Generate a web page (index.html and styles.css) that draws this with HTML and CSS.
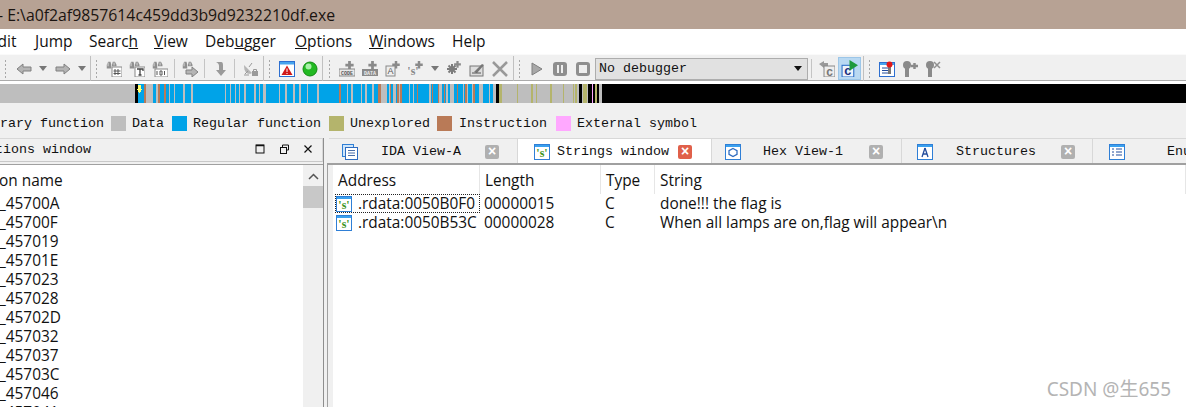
FILE: index.html
```html
<!DOCTYPE html>
<html lang="en">
<head>
<meta charset="utf-8">
<title>IDA</title>
<link rel="stylesheet" href="styles.css">
</head>
<body>
<svg class="defs" width="0" height="0">
  <defs>
    <symbol id="bino" viewBox="0 0 16 16"><path d="M1 5l2-4h3l1 4v5H1zM8 5l1-4h3l2 4v2H8z" fill="#8f8f8f"/><rect x="2" y="2" width="1.5" height="5" fill="#d0d0d0"/><rect x="10" y="2" width="1.5" height="4" fill="#d0d0d0"/></symbol>
    <symbol id="plus" viewBox="0 0 16 16"><path d="M6 0h4v4h4v4h-4v4H6V8H2V4h4z" fill="#8a8a8a"/></symbol>
    <symbol id="sicon" viewBox="0 0 16 16"><rect x=".5" y=".5" width="15" height="15" fill="#fff" stroke="#2f7fd6"/><rect x="1" y="1" width="14" height="2" fill="#3aa0ee"/><text x="8" y="13" class="icon-s">'s'</text></symbol>
  </defs>
</svg>
<div class="app">
  <header class="title">- E:\a0f2af9857614c459dd3b9d9232210df.exe</header>

  <nav class="menu">
    <span class="menu-edit">Edit</span>
    <span class="m-jump"><u>J</u>ump</span>
    <span class="m-search">Searc<u>h</u></span>
    <span class="m-view"><u>V</u>iew</span>
    <span class="m-debug">Deb<u>u</u>gger</span>
    <span class="m-opt"><u>O</u>ptions</span>
    <span class="m-win"><u>W</u>indows</span>
    <span class="m-help">Help</span>
  </nav>

  <div class="toolbar">
    <div class="tg g1">
      <i class="grip"></i>
      <span class="tb"><svg class="i" viewBox="0 0 16 16"><path d="M1 8l6-5v3h8v4H7v3z" fill="#b4b4b4" stroke="#808080"/></svg></span>
      <span class="dd"><i class="caret"></i></span>
      <span class="tb"><svg class="i" viewBox="0 0 16 16"><path d="M15 8L9 3v3H1v4h8v3z" fill="#b4b4b4" stroke="#808080"/></svg></span>
      <span class="dd"><i class="caret"></i></span>
    </div>
    <div class="tg g2">
      <i class="grip"></i>
      <span class="tb"><svg class="i" viewBox="0 0 16 16"><use href="#bino" width="12" height="12"/><rect x="6" y="6" width="10" height="10" fill="#fff" stroke="#888"/><path d="M9 8v6M12 8v6M7.500 10h7M7.500 12.500h7" stroke="#555"/></svg></span>
      <span class="tb"><svg class="i" viewBox="0 0 16 16"><use href="#bino" width="12" height="12"/><rect x="6" y="6" width="10" height="10" fill="#fff" stroke="#888"/><path d="M8 8h6v2M11 8v6M9.500 14h3" fill="none" stroke="#444" stroke-width="1.300"/></svg></span>
      <span class="tb"><svg class="i" viewBox="0 0 16 16"><use href="#bino" width="12" height="12"/><rect x="3" y="8" width="13" height="8" fill="#fff" stroke="#888"/><path d="M5 10v4M8 10h2v4H8zM12.500 10v4" fill="none" stroke="#555"/></svg></span>
      <i class="sep"></i>
      <span class="tb"><svg class="i" viewBox="0 0 16 16"><use href="#bino" width="12" height="12"/><path d="M4 9h6V6l6 5-6 5v-3H4z" fill="#b4b4b4" stroke="#808080"/></svg></span>
      <i class="sep"></i>
      <span class="tb"><svg class="i" viewBox="0 0 16 16"><path d="M4 1h5c2 0 2 2 2 4v4h3l-5 6-5-6h3V5c0-2-1-3-3-4z" fill="#9a9a9a"/></svg></span>
      <i class="sep"></i>
      <span class="tb"><svg class="i" viewBox="0 0 16 16"><path d="M2 4l8 8c-3 2-8 1-8-8z" fill="#b5b5b5"/><path d="M3 13l3-3M2 14h5M7 6l3-4" stroke="#999"/><rect x="10" y="10" width="6" height="5" fill="#9a9a9a"/><path d="M11.500 10V8.500h3V10" fill="none" stroke="#9a9a9a"/></svg></span>
    </div>
    <div class="tg g3">
      <i class="grip"></i>
      <span class="tb"><svg class="i" viewBox="0 0 16 16"><rect x=".5" y=".5" width="15" height="15" fill="#fff" stroke="#2d6fd0"/><rect x="1" y="1" width="14" height="2.500" fill="#46a4ee"/><path d="M8 4.500l5.500 9.500h-11z" fill="#d01818"/><path d="M8 7.500v3.500M8 12v1" stroke="#fff"/></svg></span>
      <span class="tb"><svg class="i" viewBox="0 0 16 16"><circle cx="8" cy="8" r="7" fill="#22b922" stroke="#128a12"/><circle cx="6.500" cy="5.500" r="3" fill="#a8f0a8"/></svg></span>
    </div>
    <div class="tg g4">
      <i class="grip"></i>
      <span class="tb"><svg class="i" viewBox="0 0 16 16"><use href="#plus" x="5" y="0" width="11" height="11"/><rect x="0" y="8" width="16" height="7" fill="#e8e8e8" stroke="#888"/><text x="8" y="14" class="icon-t">CODE</text></svg></span>
      <span class="tb"><svg class="i" viewBox="0 0 16 16"><use href="#plus" x="5" y="0" width="11" height="11"/><rect x="0" y="8" width="16" height="7" fill="#8a8a8a"/><text x="8" y="14" class="icon-t light">DATA</text></svg></span>
      <span class="tb"><svg class="i" viewBox="0 0 16 16"><use href="#plus" x="6" y="0" width="10" height="10"/><rect x="1" y="5" width="9" height="10" fill="#eee" stroke="#888"/><text x="5.500" y="13" class="icon-l">A</text></svg></span>
      <span class="tb"><svg class="i" viewBox="0 0 16 16"><use href="#plus" x="6" y="0" width="10" height="10"/><text x="5" y="14" class="icon-g">'s'</text></svg></span>
      <span class="dd wide"><i class="caret"></i></span>
      <span class="tb"><svg class="i" viewBox="0 0 16 16"><use href="#plus" x="7" y="0" width="9" height="9"/><path d="M6 3v10M1 8h10M2.500 4.500l7 7M9.500 4.500l-7 7" stroke="#7c7c7c" stroke-width="2"/></svg></span>
      <span class="tb"><svg class="i" viewBox="0 0 16 16"><rect x="1" y="5" width="13" height="10" fill="#ddd" stroke="#777"/><path d="M5 11l8-8 2 1-7 8z" fill="#777"/><path d="M3 12h9" stroke="#555"/></svg></span>
      <span class="tb"><svg class="i" viewBox="0 0 16 16"><path d="M1 1l14 14M15 1L1 15" stroke="#999" stroke-width="2.500"/></svg></span>
    </div>
    <div class="tg g5">
      <i class="grip"></i>
      <span class="tb"><svg class="i" viewBox="0 0 16 16"><path d="M3 2l10 6-10 6z" fill="#a8a8a8" stroke="#808080"/></svg></span>
      <span class="tb"><svg class="i" viewBox="0 0 16 16"><rect x="1" y="1" width="14" height="14" rx="3" fill="#8e8e8e"/><rect x="5" y="4" width="2" height="8" fill="#eee"/><rect x="9" y="4" width="2" height="8" fill="#eee"/></svg></span>
      <span class="tb"><svg class="i" viewBox="0 0 16 16"><rect x="1" y="1" width="14" height="14" rx="3" fill="#8e8e8e"/><rect x="4" y="4" width="8" height="8" fill="#eee"/></svg></span>
      <div class="combo"><span>No debugger</span><i class="caret dark"></i></div>
      <i class="sep sep-c"></i>
      <span class="tb"><svg class="i" viewBox="0 0 16 16"><path d="M0 3l5-3v2h4v3H5v2z" fill="#999"/><rect x="5" y="5" width="11" height="11" fill="#eee" stroke="#888"/><text x="10.500" y="14.500" class="icon-c gray">c</text></svg></span>
      <span class="tb active"><svg class="i wide-i" viewBox="0 0 16 16"><rect x="1" y="5" width="11" height="11" fill="#eef4fa" stroke="#2c6fc8"/><text x="6.500" y="14.500" class="icon-c">c</text><path d="M8 0l8 5-8 5z" fill="#1f9a3c"/></svg></span>
    </div>
    <div class="tg g6">
      <i class="grip"></i>
      <span class="tb"><svg class="i" viewBox="0 0 16 16"><rect x=".5" y="1.500" width="15" height="14" fill="#fff" stroke="#2d6fd0"/><rect x="1" y="2" width="14" height="2" fill="#46a4ee"/><path d="M3 7h6M3 9.500h6M3 12h6" stroke="#234c9c"/><rect x="9" y="4" width="3" height="9" fill="#777"/><circle cx="10.500" cy="3.500" r="3" fill="#e01818"/></svg></span>
      <span class="tb"><svg class="i" viewBox="0 0 16 16"><circle cx="5" cy="4" r="4" fill="#8a8a8a"/><rect x="3" y="7" width="4" height="9" fill="#8a8a8a"/><path d="M9 5h7M12.500 2v6" stroke="#8a8a8a" stroke-width="2.500"/></svg></span>
      <span class="tb"><svg class="i" viewBox="0 0 16 16"><circle cx="5" cy="4" r="4" fill="#8a8a8a"/><rect x="3" y="7" width="4" height="9" fill="#8a8a8a"/><path d="M9 1l6 6M15 1L9 7" stroke="#909090" stroke-width="1.500"/></svg></span>
    </div>
  </div>

  <svg class="navbar" viewBox="0 0 1186 19" preserveAspectRatio="none" shape-rendering="crispEdges">
    <rect width="602" height="19" fill="#bebebe"/>
    <rect x="602" width="584" height="19" fill="#000"/>
    <rect x="135" width="3" height="19" fill="#000"/>
    <path d="M138 0h6v19h-6zM153 0h3v19h-3zM160 0h4v19h-4zM166 0h3v19h-3zM170 0h4v19h-4zM175 0h8v19h-8zM185 0h6v19h-6zM193 0h32v19h-32zM226 0h4v19h-4zM231 0h4v19h-4zM236 0h3v19h-3zM240 0h4v19h-4zM246 0h8v19h-8zM256 0h3v19h-3zM260 0h3v19h-3zM266 0h13v19h-13zM280 0h5v19h-5zM287 0h6v19h-6zM295 0h4v19h-4zM301 0h6v19h-6zM308 0h9v19h-9zM319 0h20v19h-20zM341 0h6v19h-6zM348 0h3v19h-3zM353 0h8v19h-8zM362 0h3v19h-3zM367 0h5v19h-5zM374 0h6v19h-6zM387 0h2v19h-2zM391 0h2v19h-2zM396 0h1v19h-1zM402 0h7v19h-7zM410 0h3v19h-3zM414 0h3v19h-3zM418 0h11v19h-11zM431 0h7v19h-7zM442 0h4v19h-4zM448 0h2v19h-2zM454 0h9v19h-9zM464 0h2v19h-2zM468 0h4v19h-4zM474 0h5v19h-5zM483 0h6v19h-6zM490 0h3v19h-3z" fill="#00a3e8"/>
    <path d="M144 0h2v19h-2zM158 0h2v19h-2zM164 0h2v19h-2zM339 0h2v19h-2zM378 0h2v19h-2zM397 0h2v19h-2zM400 0h2v19h-2zM417 0h1v19h-1zM438 0h1v19h-1zM444 0h1v19h-1zM465 0h1v19h-1zM473 0h1v19h-1zM380 0h1v19h-1zM390 0h1v19h-1zM432 0h1v19h-1zM457 0h1v19h-1zM465 0h2v19h-2zM473 0h2v19h-2z" fill="#b97a57"/>
    <path d="M499 0h3v19h-3zM517 0h1v19h-1zM531 0h2v19h-2zM536 0h1v19h-1zM550 0h2v19h-2zM563 0h1v19h-1zM573 0h1v19h-1zM575 0h2v19h-2zM583 0h4v19h-4zM595 0h2v19h-2z" fill="#b4b46c"/>
    <path d="M496 0h3v19h-3zM579 0h3v19h-3zM588 0h3v19h-3zM591 0h1v19h-1zM593 0h2v19h-2zM597 0h2v19h-2z" fill="#000"/>
    <rect x="592" width="1" height="19" fill="#ffa8ff"/>
    <path d="M138 1h3v4h1.500l-3 4-3-4H138z" fill="#ffff70"/>
  </svg>

  <div class="legend">
    <span class="lg-first">rary function</span>
    <i class="sw c-data"></i><span class="lg-data">Data</span>
    <i class="sw c-reg"></i><span class="lg-reg">Regular function</span>
    <i class="sw c-unx"></i><span class="lg-unx">Unexplored</span>
    <i class="sw c-ins"></i><span class="lg-ins">Instruction</span>
    <i class="sw c-ext"></i><span>External symbol</span>
  </div>

  <main class="main">
    <section class="left">
      <div class="panel-head">
        <span class="panel-title">tions window</span>
        <span class="win-btns">
          <svg class="wb" viewBox="0 0 11 11"><rect x="1" y="1" width="8" height="8" fill="none" stroke="#111" stroke-width="1"/><path d="M1 1.500h8" stroke="#111" stroke-width="1.500"/></svg>
          <svg class="wb" viewBox="0 0 11 11"><path d="M3.500 3V1h6v5H7.500" fill="none" stroke="#111"/><rect x="1.500" y="3.500" width="6" height="6" fill="none" stroke="#111"/></svg>
          <svg class="wb" viewBox="0 0 11 11"><path d="M1.500 1.500l7 7M8.500 1.500l-7 7" stroke="#111" stroke-width="1.200"/></svg>
        </span>
      </div>
      <div class="list-wrap">
        <div class="list">
          <div class="list-head">on name</div>
          <div class="item">_45700A</div>
          <div class="item">_45700F</div>
          <div class="item">_457019</div>
          <div class="item">_45701E</div>
          <div class="item">_457023</div>
          <div class="item">_457028</div>
          <div class="item">_45702D</div>
          <div class="item">_457032</div>
          <div class="item">_457037</div>
          <div class="item">_45703C</div>
          <div class="item">_457046</div>
          <div class="item">_457041</div>
        </div>
        <div class="scroll">
          <svg class="chev" viewBox="0 0 11 7"><path d="M1 6l4.500-4.500L10 6" fill="none" stroke="#555" stroke-width="1.500"/></svg>
          <div class="thumb"></div>
        </div>
      </div>
    </section>

    <section class="right">
      <div class="tabs">
        <div class="tab t1">
          <svg class="ti" viewBox="0 0 16 16"><rect x=".5" y=".5" width="11" height="12" fill="#cfe6fa" stroke="#2f7fd6"/><rect x="3.500" y="3.500" width="12" height="12" fill="#fff" stroke="#2f6cc0"/><path d="M6 6.500h7M6 9h7M6 11.500h7" stroke="#4a6ea8"/></svg>
          <span class="tab-text">IDA View-A</span><i class="close">×</i>
        </div>
        <div class="tab t2 on">
          <svg class="ti" viewBox="0 0 16 16"><use href="#sicon"/></svg>
          <span class="tab-text">Strings window</span><i class="close red">×</i>
        </div>
        <div class="tab t3">
          <svg class="ti" viewBox="0 0 16 16"><rect x=".5" y=".5" width="15" height="15" fill="#fff" stroke="#2f7fd6"/><rect x="1" y="1" width="14" height="2" fill="#3aa0ee"/><path d="M8 4.500l4 2.200v3.600L8 12.500l-4-2.200V6.700z" fill="none" stroke="#2f6cc0" stroke-width="1.300"/></svg>
          <span class="tab-text">Hex View-1</span><i class="close">×</i>
        </div>
        <div class="tab t4">
          <svg class="ti" viewBox="0 0 16 16"><rect x=".5" y=".5" width="15" height="15" fill="#fff" stroke="#2f7fd6"/><rect x="1" y="1" width="14" height="2" fill="#3aa0ee"/><path d="M8 4l3 9M8 4l-3 9M6 10h4" fill="none" stroke="#234c9c" stroke-width="1.300"/></svg>
          <span class="tab-text">Structures</span><i class="close">×</i>
        </div>
        <div class="tab t5">
          <svg class="ti" viewBox="0 0 16 16"><rect x=".5" y=".5" width="15" height="15" fill="#fff" stroke="#2f7fd6"/><rect x="1" y="1" width="14" height="2" fill="#3aa0ee"/><path d="M3 5h2M3 8h2M3 11h2M7 5h6M7 8h6M7 11h6" stroke="#234c9c"/></svg>
          <span class="tab-text">Enums</span>
        </div>
      </div>
      <div class="content">
        <div class="gutter"></div>
        <div class="table">
          <div class="th">Address</div><div class="th">Length</div><div class="th">Type</div><div class="th">String</div>
          <div class="td addr focus"><svg class="ti" viewBox="0 0 16 16"><use href="#sicon"/></svg><span>.rdata:0050B0F0</span></div>
          <div class="td">00000015</div><div class="td">C</div><div class="td last">done!!! the flag is</div>
          <div class="td addr"><svg class="ti" viewBox="0 0 16 16"><use href="#sicon"/></svg><span>.rdata:0050B53C</span></div>
          <div class="td">00000028</div><div class="td">C</div><div class="td last">When all lamps are on,flag will appear\n</div>
        </div>
      </div>
    </section>
  </main>
  <div class="mark">CSDN @生655</div>
</div>
</body>
</html>
```

FILE: styles.css
```css
* { box-sizing: border-box; }
html, body { margin: 0; height: 407px; overflow: hidden; background: #fff; }
body { font-family: "Open Sans", "Liberation Sans", sans-serif; color: #111; }
.defs { position: absolute; }
.app { position: relative; width: 1186px; height: 407px; overflow: hidden; display: flex; flex-direction: column; }

.title { height: 29px; flex: none; background: #b7a294; font-size: 15.8px; line-height: 30px; white-space: nowrap; color: #1a1410; margin-left: -2px; }

.menu { height: 25px; flex: none; background: #fff; display: flex; font-size: 15.5px; line-height: 25px; white-space: nowrap; margin-left: -11px; }
.menu span { flex: none; }
.menu-edit { width: 46px; }
.m-jump { width: 54px; }
.m-search { width: 65px; }
.m-view { width: 51px; }
.m-debug { width: 90px; }
.m-opt { width: 74px; }
.m-win { width: 83px; }

.toolbar { height: 27px; flex: none; display: flex; background: #f0f0f0; border-top: 1px solid #fafafa; border-bottom: 1px solid #ababab; padding-top: 1px; }
.tg { flex: none; display: flex; align-items: center; height: 25px; border-right: 1px solid #c0c0c0; }
.g1 { width: 91px; padding-left: 4px; }
.g2 { width: 173px; padding-left: 4px; }
.g3 { width: 59px; padding-left: 4px; }
.g4 { width: 191px; padding-left: 5px; }
.g5 { width: 350px; padding-left: 4px; }
.g6 { flex: 1; border-right: 0; padding-left: 4px; }
.grip { flex: none; width: 3px; height: 19px; margin-right: 4px; background: radial-gradient(circle, #a8a8a8 0 1px, transparent 1px) 0 0 / 3px 4px; }
.g1 .grip { margin-right: 5px; }
.tb { flex: none; width: 23px; height: 23px; display: flex; align-items: center; justify-content: center; }
.tb.active { background: #b9d9f2; box-shadow: inset 0 0 0 1px #9cc6e8; }
.i { width: 16px; height: 16px; display: block; }
.wide-i { width: 17px; height: 17px; }
.dd { flex: none; width: 16px; display: flex; justify-content: center; }
.dd.wide { width: 15px; }
.caret { display: block; width: 0; height: 0; border: 4.5px solid transparent; border-top: 5px solid #777; border-bottom: 0; }
.caret.dark { border-top-color: #111; border-width: 5px 4px 0; }
.sep { flex: none; width: 1px; height: 19px; margin: 0 3px; background: #c4c4c4; }
.sep-c { margin: 0 3px; }
.combo { flex: none; width: 213px; height: 22px; margin-left: 1px; display: flex; justify-content: space-between; align-items: center; padding: 0 5px 0 3px; background: #e1e1e1; border: 1px solid #adadad; font: 13.33px "Liberation Mono", monospace; }
.icon-t { font: bold 5px "Liberation Mono", monospace; text-anchor: middle; fill: #555; }
.icon-t.light { fill: #eee; }
.icon-l { font: 9px "Liberation Sans", sans-serif; text-anchor: middle; fill: #555; }
.icon-g { font: bold 12px "Liberation Serif", serif; text-anchor: middle; fill: #8a8a8a; }
.icon-c { font: bold 12px "Liberation Sans", sans-serif; text-anchor: middle; fill: #1a2f80; }
.icon-c.gray { fill: #777; }
.icon-s { font: bold 12px "Liberation Serif", serif; text-anchor: middle; fill: #3f9622; }

.navbar { display: block; flex: none; width: 1186px; height: 19px; margin-top: 3px; }

.legend { height: 35px; flex: none; background: #f0f0f0; display: flex; align-items: center; padding-top: 5px; font: 13.33px "Liberation Mono", monospace; white-space: nowrap; }
.sw { flex: none; width: 15px; height: 15px; margin-right: 6px; }
.c-data { background: #bebebe; }
.c-reg { background: #00a3e8; }
.c-unx { background: #b4b46c; }
.c-ins { background: #b97a57; }
.c-ext { background: #ffa8ff; }
.lg-first { width: 111px; }
.lg-data { width: 40px; }
.lg-reg { width: 136px; }
.lg-unx { width: 87px; }
.lg-ins { width: 97px; margin-left: 1px; }

.main { flex: 1; min-height: 0; display: flex; background: #f0f0f0; }
.left { flex: none; width: 324px; display: flex; flex-direction: column; border-right: 1px solid #8e8e8e; }
.panel-head { flex: none; height: 24px; background: #f0f0f0; border-top: 1px solid #d8d8d8; border-bottom: 1px solid #c8c8c8; border-right: 1px solid #d8d8d8; display: flex; justify-content: space-between; align-items: center; font: 13.33px "Liberation Mono", monospace; padding-bottom: 2px; }
.panel-title { margin-left: -5px; white-space: nowrap; }
.win-btns { display: flex; gap: 13px; padding-right: 8px; }
.wb { width: 11px; height: 11px; display: block; }
.list-wrap { flex: 1; min-height: 0; display: flex; margin-top: 2px; border-top: 1px solid #a0a0a0; overflow: hidden; }
.list { flex: none; width: 303px; background: #fff; font-size: 15.4px; overflow: hidden; white-space: nowrap; }
.list-head { height: 29px; line-height: 31px; margin-left: -1px; overflow: hidden; }
.item { height: 19px; line-height: 19px; margin-left: -1px; }
.scroll { flex: 1; background: #f0f0f0; display: flex; flex-direction: column; align-items: center; }
.chev { width: 11px; height: 7px; margin-top: 8px; }
.thumb { align-self: stretch; height: 22px; margin-top: 6px; background: #c8c8c8; }

.right { flex: 1; min-width: 0; display: flex; flex-direction: column; margin-left: 3px; }
.tabs { flex: none; height: 27px; display: grid; grid-template-columns: 189px 194px 190px 191px 1fr; padding-left: 2px; border-bottom: 2px solid #a0a0a0; overflow: hidden; }
.tab { display: flex; align-items: center; background: #f0f0f0; border-top: 1px solid #d8d8d8; border-right: 1px solid #d8d8d8; font: 13.33px "Liberation Mono", monospace; white-space: nowrap; }
.t1 { padding-left: 13px; }
.t2 { padding-left: 16px; }
.t3 { padding-left: 13px; }
.t4 { padding-left: 15px; }
.t5 { padding-left: 16px; }
.tab.on { background: #fff; height: 26px; }
.ti { flex: none; width: 16px; height: 16px; display: block; }
.tab-text { margin-left: 23px; }
.t2 .tab-text { margin-left: 7px; }
.t3 .tab-text { margin-left: 22px; }
.t5 .tab-text { margin-left: 42px; }
.close { flex: none; width: 14px; height: 14px; margin-left: auto; margin-right: 18px; border-radius: 2px; background: #b0b0b0; color: #fff; font: bold 14px/13px "Liberation Sans", sans-serif; text-align: center; }
.close.red { background: #e0604a; margin-right: 19px; }
.t4 .close { margin-right: 17px; }

.content { flex: 1; min-height: 0; display: flex; }
.gutter { flex: none; width: 6px; background: #f0f0f0; border-left: 1px solid #a0a0a0; }
.table { flex: 1; background: #fff; display: grid; grid-template-columns: 147px 121px 54px 1fr; grid-template-rows: 29px; grid-auto-rows: 19px; font-size: 15.4px; align-content: start; white-space: nowrap; }
.th { height: 29px; line-height: 31px; padding-left: 5px; border-right: 1px solid #e6e6e6; grid-row: 1; }
.th:last-child { border-right: 0; }
.td { height: 19px; line-height: 19px; padding-left: 4px; }
.td.last { padding-left: 5px; }
.addr { display: flex; align-items: center; gap: 6px; border: 1px solid transparent; padding-left: 0; margin-left: 2px; }
.focus { border: 1px dotted #222; }

.mark { position: absolute; right: 15px; bottom: 5px; font: 19px "Noto Sans", "Noto Sans CJK SC", sans-serif; color: #b4b4b4; }
```
